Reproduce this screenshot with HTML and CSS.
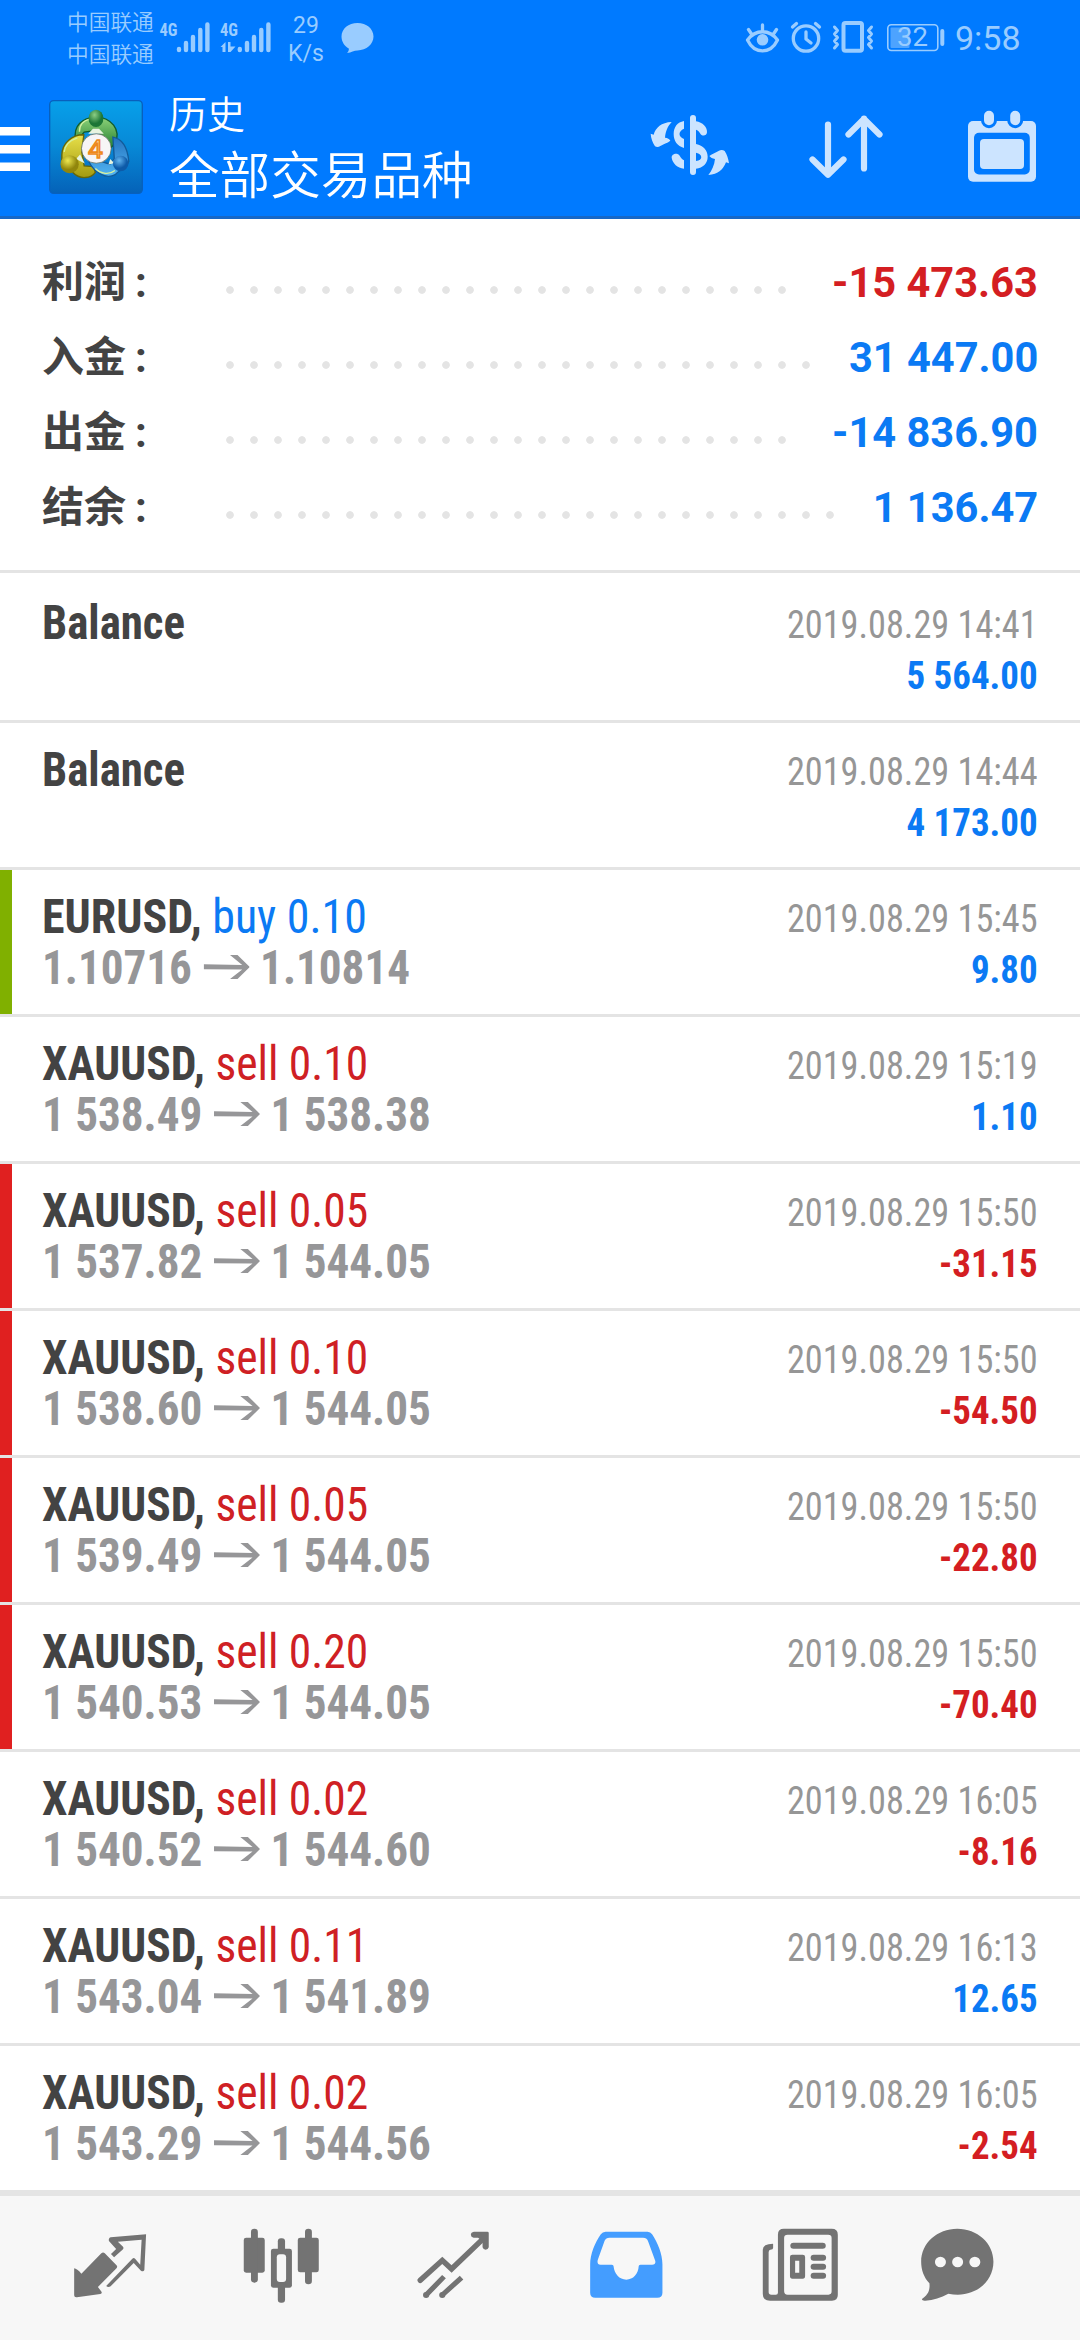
FILE: index.html
```html
<!DOCTYPE html>
<html lang="zh-CN">
<head>
<meta charset="utf-8">
<title>历史</title>
<link rel="stylesheet" href="styles.css">
</head>
<body>
<header class="header">
  <div class="status">
    <div class="carriers"><span>中国联通</span><span>中国联通</span></div>
    <svg class="signals" width="116" height="75" viewBox="157 0 116 75">
      <g class="net"><text x="159.5" y="36" textLength="18" lengthAdjust="spacingAndGlyphs">4G</text><text x="220" y="36" textLength="18" lengthAdjust="spacingAndGlyphs">4G</text></g>
      <g stroke="currentColor" stroke-width="4.400" stroke-linecap="round"><path d="M179 49v1M186 43v7M193 37v13M200.3 30v20M207.4 24.500v25.500"/><path d="M239.800 49v1M247 43v7M254 37v13M261.300 30v20M268.400 24.500v25.500"/></g>
      <path d="M220.500 47l5-5v10h-3v-5zM228 42h2.500v4.500h5l-5 5.500H228z" fill="currentColor"/>
    </svg>
    <div class="speed"><span>29</span><span>K/s</span></div>
    <svg width="34" height="75" viewBox="341 0 34 75"><path d="M357.500 23c9 0 16 5.800 16 13.500S366.500 50 357.500 50.500c-3.500 0-6 2-10.500 2.500 1.500-1.500 2-3 1.800-4.500-4.500-2.500-7.300-7-7.300-12C341.500 28.800 348.500 23 357.500 23z" fill="currentColor"/></svg>
    <svg class="indicators" width="202" height="75" viewBox="745 0 202 75" fill="none" stroke="currentColor" stroke-width="3.300" stroke-linecap="round" stroke-linejoin="round">
      <path d="M747.500 40c8-11 22-11 30 0-7 14.500-23 14.500-30 0zM762.500 25v5M748.500 29.500l3 4.500M776.500 29.500l-3 4.500"/><circle cx="762.500" cy="39.800" r="5.800" fill="currentColor" stroke="none"/>
      <circle cx="806" cy="38.500" r="12.700"/><path d="M806 32v7l5 4M792.500 27l4-3.500M819.500 27l-4-3.500"/>
      <rect x="843.500" y="23" width="18.500" height="27.800" rx="2" stroke-width="4"/><path d="M834.500 27l3 3.500-3 3.500 3 3.500-3 3.500 3 3.500-3 3.500M871.500 27l-3 3.500 3 3.500-3 3.500 3 3.500-3 3.500 3 3.500" stroke-width="3"/>
      <rect x="887.800" y="24.800" width="50" height="25.700" rx="3.500" stroke-width="1.600"/><path d="M942.300 31v13" stroke-width="4"/><rect x="890.500" y="27.500" width="19" height="20.500" rx="1" fill="currentColor" stroke="none" opacity=".5"/>
      <text class="charge" x="897" y="46" textLength="31" lengthAdjust="spacingAndGlyphs">32</text>
    </svg>
    <div class="clock">9:58</div>
  </div>
  <div class="toolbar">
    <svg class="menu" width="30" height="141" viewBox="0 75 30 141"><path d="M0 127h30v8.500H0zM0 145h30v8.500H0zM0 162.500h30v8.500H0z"/></svg>
    <svg class="logo" width="94" height="94" viewBox="28 29 278 281" preserveAspectRatio="none">
      <defs>
        <linearGradient id="sky" x1="0" y1="0" x2="0" y2="1"><stop offset="0" stop-color="#07a0ea"/><stop offset=".5" stop-color="#0788d6"/><stop offset="1" stop-color="#0562b8"/></linearGradient>
        <linearGradient id="green" x1="0" y1="0" x2="0" y2="1"><stop offset="0" stop-color="#8fd37a"/><stop offset="1" stop-color="#1c7a2c"/></linearGradient>
        <linearGradient id="yellow" x1="0" y1="0" x2="0" y2="1"><stop offset="0" stop-color="#e8e04a"/><stop offset="1" stop-color="#a39a10"/></linearGradient>
        <linearGradient id="blue" x1="0" y1="0" x2="0" y2="1"><stop offset="0" stop-color="#2473c0"/><stop offset="1" stop-color="#52b5f2"/></linearGradient>
        <radialGradient id="greenBall" cx=".4" cy=".3"><stop offset="0" stop-color="#8cce84"/><stop offset="1" stop-color="#1c7636"/></radialGradient>
        <radialGradient id="yellowBall" cx=".4" cy=".3"><stop offset="0" stop-color="#eee850"/><stop offset="1" stop-color="#91860c"/></radialGradient>
        <radialGradient id="blueBall" cx=".4" cy=".3"><stop offset="0" stop-color="#62b4ef"/><stop offset="1" stop-color="#0d5aa8"/></radialGradient>
      </defs>
      <rect x="30" y="31" width="274" height="277" rx="12" fill="url(#sky)" stroke="#0860bd" stroke-width="4"/>
      <path d="M107 146c-8-38 18-65 60-66 46 1 74 38 57 78l-19 20-12-36-25-22-36 5-14 17z" fill="url(#green)" stroke="#125c2c" stroke-width="4"/>
      <path d="M131 133c-34-1-64 24-65 60v22l32 30c22 24 55 18 67 0l-5-17-28-2-7-43z" fill="url(#yellow)" stroke="#666608" stroke-width="4"/>
      <path d="M217 140c29 5 43 32 47 72-6 20-28 25-40 40-28 15-61-5-79-40l25-3 38 12 13-17z" fill="url(#blue)" stroke="#125b9a" stroke-width="4"/>
      <path d="M73 184c2-20 18-35 39-42M118 124c-1-20 12-34 30-38M165 234c17 17 42 19 58 6" fill="none" stroke="#d4f0a0" stroke-width="4"/>
      <path d="M158 115h18l14 15h-46zM120 192l-12 13 26 14zM209 205l-5 17 17-4z" fill="#e8f4e0"/>
      <ellipse cx="167" cy="84" rx="22" ry="26" fill="url(#greenBall)"/>
      <circle cx="89" cy="221" r="27" fill="url(#yellowBall)"/>
      <circle cx="240" cy="219" r="23" fill="url(#blueBall)"/>
      <circle cx="168" cy="174" r="44" fill="#f7f5f6" stroke="#50604c" stroke-width="2"/>
      <text class="version" x="166" y="201" text-anchor="middle">4</text>
    </svg>
    <div class="titles"><div class="section">历史</div><div class="symbols">全部交易品种</div></div>
    <svg class="action currency" width="80" height="62" viewBox="30 72 240 186" fill="currentColor">
      <path d="M150 84a9 9 0 0 1 18 0v10c20 3 34 17 33 33-1 12-16 13-21 3-3-6-7-9-12-11v43c22 4 35 19 35 38 0 20-14 33-35 36v10a9 9 0 0 1-18 0zM168 188v25c21-2 21-21 0-25z" fill-rule="evenodd"/>
      <path d="M132 93c-20 4-31 18-31 39s11 36 31 42v-27c-18-7-18-23 0-31zM132 211c-6-3-9-7-13-14-7-11-25-6-24 6 3 18 17 30 37 33z"/>
      <path d="M95 96c-31 1-48 17-54 38l-9-3c1 15 6 27 13 38 5 3 11 3 16-1 10-7 20-8 30-16-3-5-8-9-16-9 2-20 8-34 20-47zM205 255c30-2 45-17 53-38l9 3c-2-14-6-26-13-37-5-4-12-4-17-1-9 6-20 8-29 16 4 5 9 8 17 9-2 19-9 34-20 48z"/>
    </svg>
    <svg class="action sort" width="76" height="70" viewBox="808 113 76 70" fill="none" stroke="currentColor" stroke-width="6.200" stroke-linecap="round" stroke-linejoin="round"><path d="M828 124.500v50M812.500 159.500l15.500 15.300 15.500-15.300M864 168.500v-50M848.500 134.500L864 119l15.500 15.500"/></svg>
    <svg class="action calendar" width="70" height="74" viewBox="967 109 70 74"><rect x="968" y="121" width="68" height="60.700" rx="5" fill="currentColor"/><rect x="974" y="132.700" width="55.800" height="41.800" rx="5" fill="#007aff"/><rect x="980" y="139" width="44" height="30" rx="4" fill="currentColor"/><g fill="currentColor" stroke="#007aff" stroke-width="3"><rect x="982.500" y="109.200" width="13" height="17.500" rx="6.500"/><rect x="1008.700" y="109.200" width="13" height="17.500" rx="6.500"/></g></svg>
  </div>
</header>

<section class="summary">
  <div class="total"><div class="label">利润<span class="colon">:</span></div><div class="dots" style="width:576px"></div><div class="amount loss">-15 473.63</div></div>
  <div class="total"><div class="label">入金<span class="colon">:</span></div><div class="dots" style="width:600px"></div><div class="amount">31 447.00</div></div>
  <div class="total"><div class="label">出金<span class="colon">:</span></div><div class="dots" style="width:576px"></div><div class="amount">-14 836.90</div></div>
  <div class="total"><div class="label">结余<span class="colon">:</span></div><div class="dots" style="width:624px"></div><div class="amount">1 136.47</div></div>
</section>

<svg width="0" height="0" class="sprite"><symbol id="arrow" viewBox="0 0 49 24"><path d="M0 9.300L41 10 28 0h8l13 12-13 12h-8l13-9.600L0 14.300z" fill="currentColor"/></symbol></svg>

<main class="deals">
  <article class="deal"><div class="info"><div class="name balance">Balance</div></div><div class="result"><div class="date">2019.08.29 14:41</div><div class="value">5 564.00</div></div></article>
  <article class="deal"><div class="info"><div class="name balance">Balance</div></div><div class="result"><div class="date">2019.08.29 14:44</div><div class="value">4 173.00</div></div></article>
  <article class="deal tp"><div class="info"><div class="name eurusd">EURUSD, <span class="buy">buy 0.10</span></div><div class="prices">1.10716<svg class="to"><use href="#arrow"/></svg>1.10814</div></div><div class="result"><div class="date">2019.08.29 15:45</div><div class="value">9.80</div></div></article>
  <article class="deal"><div class="info"><div class="name">XAUUSD, <span class="sell">sell 0.10</span></div><div class="prices">1 538.49<svg class="to"><use href="#arrow"/></svg>1 538.38</div></div><div class="result"><div class="date">2019.08.29 15:19</div><div class="value">1.10</div></div></article>
  <article class="deal sl"><div class="info"><div class="name">XAUUSD, <span class="sell">sell 0.05</span></div><div class="prices">1 537.82<svg class="to"><use href="#arrow"/></svg>1 544.05</div></div><div class="result"><div class="date">2019.08.29 15:50</div><div class="value loss">-31.15</div></div></article>
  <article class="deal sl"><div class="info"><div class="name">XAUUSD, <span class="sell">sell 0.10</span></div><div class="prices">1 538.60<svg class="to"><use href="#arrow"/></svg>1 544.05</div></div><div class="result"><div class="date">2019.08.29 15:50</div><div class="value loss">-54.50</div></div></article>
  <article class="deal sl"><div class="info"><div class="name">XAUUSD, <span class="sell">sell 0.05</span></div><div class="prices">1 539.49<svg class="to"><use href="#arrow"/></svg>1 544.05</div></div><div class="result"><div class="date">2019.08.29 15:50</div><div class="value loss">-22.80</div></div></article>
  <article class="deal sl"><div class="info"><div class="name">XAUUSD, <span class="sell">sell 0.20</span></div><div class="prices">1 540.53<svg class="to"><use href="#arrow"/></svg>1 544.05</div></div><div class="result"><div class="date">2019.08.29 15:50</div><div class="value loss">-70.40</div></div></article>
  <article class="deal"><div class="info"><div class="name">XAUUSD, <span class="sell">sell 0.02</span></div><div class="prices">1 540.52<svg class="to"><use href="#arrow"/></svg>1 544.60</div></div><div class="result"><div class="date">2019.08.29 16:05</div><div class="value loss">-8.16</div></div></article>
  <article class="deal"><div class="info"><div class="name">XAUUSD, <span class="sell">sell 0.11</span></div><div class="prices">1 543.04<svg class="to"><use href="#arrow"/></svg>1 541.89</div></div><div class="result"><div class="date">2019.08.29 16:13</div><div class="value">12.65</div></div></article>
  <article class="deal"><div class="info"><div class="name">XAUUSD, <span class="sell">sell 0.02</span></div><div class="prices">1 543.29<svg class="to"><use href="#arrow"/></svg>1 544.56</div></div><div class="result"><div class="date">2019.08.29 16:05</div><div class="value loss">-2.54</div></div></article>
</main>

<nav class="tabs">
  <svg class="tab quotes" viewBox="200 190 240 250" preserveAspectRatio="none"><path fill="currentColor" d="M294 281q5-5 10 0l34 36q4 4 0 9l-54 56 11 15q1 5-4 6l-68 10q-8 1-8-6v-81q8 1 21 16z"/><path fill="currentColor" fill-rule="evenodd" d="M321 233l103-9-5 107q-3 7-10 2l-21-23-67 70q-7 5-13-1l76-82q4-4 8 0l15 18 4-75-69 6 15 15q3 4 0 8l-26 24-9-10 15-15-21-24q-2-8 5-11z"/></svg>
  <svg class="tab chart" viewBox="700 190 240 250" preserveAspectRatio="none"><g fill="currentColor"><rect x="708" y="234" width="61" height="105" rx="7"/><rect x="729" y="207" width="20" height="162" rx="10"/><rect x="865" y="234" width="61" height="104" rx="7"/><rect x="886" y="207" width="20" height="167" rx="10"/><rect x="787" y="267" width="61" height="117" rx="7"/><rect x="807" y="236" width="21" height="193" rx="9"/></g><rect x="804" y="284" width="27" height="83" rx="9" fill="#f7f7f7"/></svg>
  <svg class="tab trade" viewBox="1197 190 240 250" preserveAspectRatio="none"><g fill="none" stroke="currentColor" stroke-width="16"><path d="M1221 362l64-60 27 26 96-95" stroke-linecap="round"/><path d="M1238 406l52-55M1285 406l56-52" stroke-width="15"/></g><g fill="currentColor"><circle cx="1238" cy="406" r="9"/><circle cx="1285" cy="406" r="9"/><path d="M1377 216h39q4 0 4 4v43q-2 7-9 7t-9-7v-18l-13-11h-13q-8-2-8-9t9-9z"/></g></svg>
  <svg class="tab active" viewBox="131 190 240 250" preserveAspectRatio="none"><path fill="currentColor" fill-rule="evenodd" d="M191 216H313q8 0 13 8c16 25 30 60 30 90v85q0 15-15 15H161q-15 0-15-15v-85c0-30 14-65 31-90q5-8 14-8zM202 234q-10 0-14 9l-20 58q-3 14 8 14h33q5 0 5 5c2 23 17 40 37 40s35-17 36-40q0-5 5-5h34q12 0 9-12l-21-59q-4-10-14-10z"/></svg>
  <svg class="tab news" viewBox="635 190 240 250" preserveAspectRatio="none"><g fill="currentColor"><path fill-rule="evenodd" d="M707 207h139q18 0 18 18v181q0 17-17 17H667q-21 0-21-21V271q0-19 30-19v13q0 5-8 5-5 0-5 8v119q0 8 8 8h13q6 0 6-6V225q0-18 17-18zM718 225q-10 0-10 10v159q0 11 10 11h119q9 0 9-10V235q0-10-10-10z"/><rect x="726" y="249" width="103" height="18" rx="9"/><path fill-rule="evenodd" d="M732 285h30q7 0 7 7v57q0 8-7 8h-30q-7 0-7-8v-57q0-7 7-7zM740 303v36h12v-36z"/><rect x="785" y="285" width="45" height="18" rx="9"/><rect x="785" y="312" width="45" height="18" rx="9"/><rect x="785" y="339" width="45" height="18" rx="9"/></g></svg>
  <svg class="tab chat" viewBox="1093 190 240 250" preserveAspectRatio="none"><path fill="currentColor" d="M1213 207c58 0 105 43 105 99 0 64-60 112-131 96-22 12-43 20-67 21-8 1-14-4-6-8 15-11 20-25 18-44-16-18-24-40-24-65 0-56 47-99 105-99z"/><g fill="#f7f7f7"><circle cx="1164" cy="307" r="16"/><circle cx="1214" cy="307" r="16"/><circle cx="1264" cy="307" r="16"/></g></svg>
</nav>
</body>
</html>
```
FILE: styles.css
```css
* { box-sizing: border-box; }
body {
  margin: 0;
  width: 1080px;
  height: 2340px;
  overflow: hidden;
  background: #fff;
  font-family: Roboto, "Noto Sans CJK SC", sans-serif;
  color: #434343;
}
svg { display: block; flex: none; }
.sprite { height: 0; width: 0; }

.header {
  height: 219px;
  background: #007aff;
  border-bottom: 3px solid #1668c8;
}
.status {
  display: flex;
  height: 75px;
  padding-left: 67px;
  color: #99ccff;
}
.carriers {
  display: flex;
  flex-direction: column;
  width: 90px;
  padding-top: 7px;
  font-size: 21.700px;
  line-height: 32px;
  font-weight: 350;
  white-space: nowrap;
}
.net text { font: bold 19px "Roboto Condensed", sans-serif; fill: currentColor; }
.speed {
  display: flex;
  flex-direction: column;
  width: 68px;
  padding: 12px 2px 0 0;
  text-align: center;
  font-size: 23px;
  line-height: 27.500px;
}
.indicators { margin-left: 370px; }
.charge { font: 25px Roboto, sans-serif; fill: currentColor; stroke: none; }
.clock {
  margin-left: 8px;
  font-size: 34px;
  line-height: 76px;
}

.toolbar {
  display: flex;
  align-items: flex-start;
  height: 141px;
  color: #cce4ff;
}
.menu { fill: #fff; }
.logo { margin: 25px 0 0 19px; }
.version {
  font: 78px "Liberation Sans", sans-serif;
  fill: #fbd9a5;
  stroke: #ee8a1c;
  stroke-width: 5px;
}
.titles {
  width: 326px;
  padding: 13px 0 0 26px;
  color: #fff;
  font-weight: 350;
  white-space: nowrap;
}
.section { font-size: 38px; line-height: 54px; }
.symbols { font-size: 50.600px; line-height: 69px; }
.currency { margin: 39px 0 0 181px; }
.sort { margin: 38px 0 0 78px; }
.calendar { margin: 34px 0 0 83px; }

.summary {
  height: 354px;
  padding: 26px 42px 0;
  border-bottom: 3px solid #e4e4e4;
}
.total {
  display: flex;
  height: 75px;
  font-size: 42px;
  line-height: 75px;
  font-weight: 700;
}
.label { width: 176px; }
.colon { margin-left: 9px; }
.dots {
  background: radial-gradient(circle at 12px 45px, #e4e4e4 3.400px, transparent 4.200px) 0 0 / 24px 75px repeat-x;
}
.amount {
  margin-left: auto;
  color: #0b7af4;
  white-space: nowrap;
  transform: scaleX(.99);
  transform-origin: 100% 0;
}
.amount.loss, .value.loss { color: #d41e22; }

.deals {
  height: 1617px;
  padding-top: 3px;
  font-family: "Roboto Condensed", Roboto, sans-serif;
}
.deal {
  display: flex;
  justify-content: space-between;
  height: 147px;
  padding: 21px 42px 0 30px;
  border-left: 12px solid transparent;
  background: linear-gradient(#e4e4e4, #e4e4e4) 0 100% / 100% 3px no-repeat border-box;
}
.deal:last-child { background: none; }
.tp, .sl { border-left: 0; padding-left: 0; }
.tp::before, .sl::before {
  content: "";
  width: 12px;
  height: 144px;
  margin: -21px 30px 0 0;
  background: #80b000;
}
.sl::before { background: #e02020; }
.info {
  flex: 1;
  font-size: 48px;
  line-height: 51px;
  font-weight: 700;
  white-space: nowrap;
}
.name { transform: scaleX(.948); transform-origin: 0 0; }
.name.eurusd { transform: scaleX(.957); }
.name.balance { transform: scaleX(.935); }
.buy, .sell { font-weight: 400; color: #0b7af4; }
.sell { color: #cf2024; }
.prices {
  display: flex;
  align-items: center;
  height: 51px;
  color: #969698;
  transform: scaleX(.94);
  transform-origin: 0 0;
}
.to { width: 49px; height: 24px; margin: -1px 11px 0 12.500px; }
.result {
  padding-top: 3px;
  font-size: 39px;
  line-height: 51px;
  text-align: right;
  white-space: nowrap;
}
.date { color: #969696; transform: scaleX(.93); transform-origin: 100% 0; }
.value {
  font-weight: 700;
  color: #0b7af4;
  transform: scaleX(.947);
  transform-origin: 100% 0;
}

.tabs {
  display: flex;
  height: 150px;
  padding: 27.300px 0 0 68.900px;
  border-top: 6px solid #e4e4e4;
  background: #f7f7f7;
  color: #737373;
}
.tab { width: 82.600px; height: 83.300px; }
.chart { margin-left: 89.500px; }
.trade { margin-left: 88.600px; }
.active { margin-left: 90.300px; color: #449dff; }
.news { margin-left: 91px; }
.chat { margin-left: 75px; }
```
